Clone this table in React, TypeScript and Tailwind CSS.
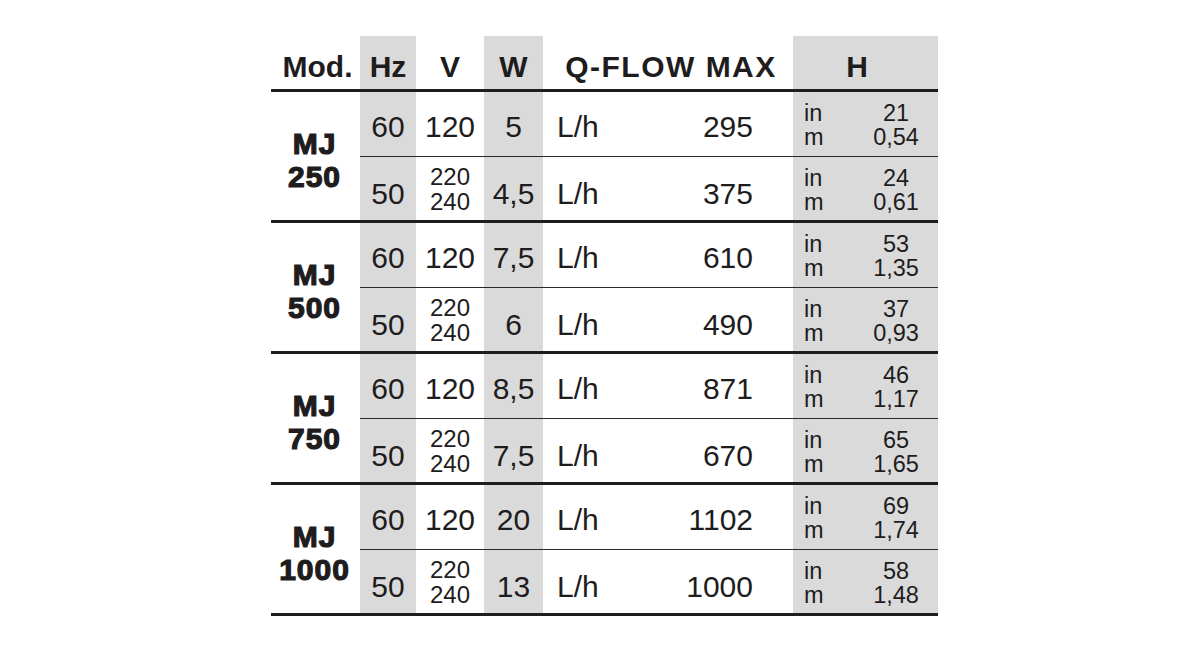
type Row = { hz: string; v: string[]; w: string; q: string; h: [string, string] }
type Group = { model: [string, string]; rows: [Row, Row] }

const GROUPS: Group[] = [
  {
    model: ['MJ', '250'],
    rows: [
      { hz: '60', v: ['120'], w: '5', q: '295', h: ['21', '0,54'] },
      { hz: '50', v: ['220', '240'], w: '4,5', q: '375', h: ['24', '0,61'] },
    ],
  },
  {
    model: ['MJ', '500'],
    rows: [
      { hz: '60', v: ['120'], w: '7,5', q: '610', h: ['53', '1,35'] },
      { hz: '50', v: ['220', '240'], w: '6', q: '490', h: ['37', '0,93'] },
    ],
  },
  {
    model: ['MJ', '750'],
    rows: [
      { hz: '60', v: ['120'], w: '8,5', q: '871', h: ['46', '1,17'] },
      { hz: '50', v: ['220', '240'], w: '7,5', q: '670', h: ['65', '1,65'] },
    ],
  },
  {
    model: ['MJ', '1000'],
    rows: [
      { hz: '60', v: ['120'], w: '20', q: '1102', h: ['69', '1,74'] },
      { hz: '50', v: ['220', '240'], w: '13', q: '1000', h: ['58', '1,48'] },
    ],
  },
]

const GRAY = 'bg-[#dadada]'

function ThickLine() {
  return <div className="h-[3px] w-full bg-[#1e1c1d]" />
}

function DataRow({ row, second }: { row: Row; second: boolean }) {
  // single-line figures sit a little below the middle of the row, more so in the lower one
  const shift = second ? 'pt-[11px]' : 'pt-[5px]'
  return (
    <div className={`flex ${second ? 'h-[63px]' : 'h-[64px]'}`}>
      <div className={`flex w-[56px] items-center justify-center ${shift} ${GRAY}`}>{row.hz}</div>
      <div className="flex w-[68px] items-center justify-center">
        {row.v.length === 1 ? (
          <span className={shift}>{row.v[0]}</span>
        ) : (
          <div className="flex flex-col items-center text-[24px] leading-[25px]">
            {row.v.map((v) => <span key={v}>{v}</span>)}
          </div>
        )}
      </div>
      <div className={`flex w-[59px] items-center justify-center ${shift} ${GRAY}`}>{row.w}</div>
      <div className={`flex w-[250px] items-center justify-between pl-[14px] pr-[40px] ${shift}`}>
        <span>L/h</span>
        <span>{row.q}</span>
      </div>
      <div className={`flex w-[145px] items-center pl-[11px] pt-[2px] text-[23.5px] leading-[24px] ${GRAY}`}>
        <div className="flex flex-col">
          <span>in</span>
          <span>m</span>
        </div>
        <div className="ml-auto mr-[2px] flex w-[80px] flex-col items-center">
          <span>{row.h[0]}</span>
          <span>{row.h[1]}</span>
        </div>
      </div>
    </div>
  )
}

function ModelGroup({ group }: { group: Group }) {
  return (
    <div className="flex">
      <div className="flex w-[89px] flex-col items-center justify-center pr-[2px] pt-[7px] text-[30px] font-bold leading-[33px] tracking-[1px] [-webkit-text-stroke:1.2px_#1e1c1d]">
        <span>{group.model[0]}</span>
        <span>{group.model[1]}</span>
      </div>
      <div className="flex flex-col">
        <DataRow row={group.rows[0]} second={false} />
        <div className="h-px w-full bg-[#2a2a2a]" />
        <DataRow row={group.rows[1]} second />
      </div>
    </div>
  )
}

export default function App() {
  return (
    <div className="min-h-[646px] w-full bg-white pt-[36px] font-['Liberation_Sans',Arial,sans-serif] text-[30px] leading-none text-[#1e1c1d]">
      <div className="ml-[271px] w-[667px]">
        <div className="flex h-[53px] items-end font-bold">
          <div className="flex w-[89px] justify-center pb-[7px] pl-[4px]">Mod.</div>
          <div className={`flex h-full w-[56px] items-end justify-center pb-[7px] ${GRAY}`}>Hz</div>
          <div className="flex w-[68px] justify-center pb-[7px]">V</div>
          <div className={`flex h-full w-[59px] items-end justify-center pb-[7px] ${GRAY}`}>W</div>
          <div className="flex w-[250px] justify-center pb-[7px] pl-[6px] tracking-[1.5px]">Q-FLOW MAX</div>
          <div className={`flex h-full w-[145px] items-end justify-center pb-[7px] pr-[17px] ${GRAY}`}>H</div>
        </div>
        <ThickLine />
        {GROUPS.map((g) => (
          <div key={g.model[1]}>
            <ModelGroup group={g} />
            <ThickLine />
          </div>
        ))}
      </div>
    </div>
  )
}
